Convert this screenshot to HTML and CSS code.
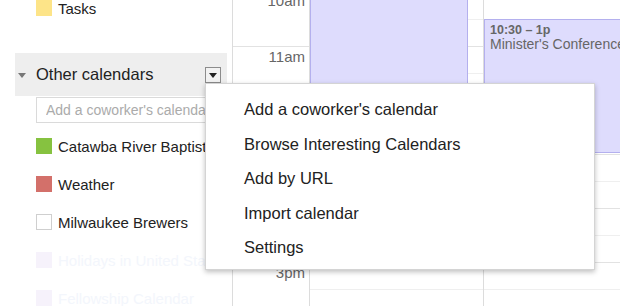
FILE: index.html
```html
<!DOCTYPE html>
<html lang="en">

<head>
    <meta charset="UTF-8">
    <title>Calendar</title>
    <link rel="stylesheet" href="styles.css">
</head>

<body>

    <div class="app">
        <aside class="sidebar">
            <div class="cal-item">
                <span class="swatch yellow"></span>
                <span class="cal-name">Tasks</span>
            </div>

            <div class="section-head">
                <span class="caret"></span>
                <span class="section-title">Other calendars</span>
                <span class="menu-btn"><span class="menu-btn-arrow"></span></span>
            </div>
            <input class="add-input" type="text" placeholder="Add a coworker's calendar">

            <div class="cal-list">
                <div class="cal-item">
                    <span class="swatch green"></span>
                    <span class="cal-name">Catawba River Baptist Association</span>
                </div>
                <div class="cal-item">
                    <span class="swatch red"></span>
                    <span class="cal-name">Weather</span>
                </div>
                <div class="cal-item">
                    <span class="swatch empty"></span>
                    <span class="cal-name">Milwaukee Brewers</span>
                </div>
                <!-- faded rows at the bottom of the shot -->
                <div class="cal-item faded">
                    <span class="swatch pale"></span>
                    <span class="cal-name">Holidays in United States</span>
                </div>
                <div class="cal-item faded">
                    <span class="swatch pale"></span>
                    <span class="cal-name">Fellowship Calendar</span>
                </div>
            </div>
        </aside>

        <main class="week">
            <div class="times">
                <div class="hour">10am</div>
                <div class="hour">11am</div>
                <div class="hour">12pm</div>
                <div class="hour">1pm</div>
                <div class="hour">2pm</div>
                <div class="hour">3pm</div>
            </div>
            <div class="day">
                <div class="event event-long"></div>
            </div>
            <div class="day">
                <div class="event event-conf">
                    <div class="event-time">10:30 – 1p</div>
                    <div class="event-title">Minister's Conference</div>
                </div>
            </div>
        </main>

        <ul class="menu">
            <li>Add a coworker's calendar</li>
            <li>Browse Interesting Calendars</li>
            <li>Add by URL</li>
            <li>Import calendar</li>
            <li>Settings</li>
        </ul>
    </div>

</body>

</html>
```

FILE: styles.css
```css
body {
    margin: 0;
    font-family: "Liberation Sans", Arial, sans-serif;
    background-color: #fff;
    color: #222;
}

.app {
    position: relative;
    display: flex;
    width: 620px;
    height: 306px;
    overflow: hidden;
}

/* left column */
.sidebar {
    width: 232px;
    flex-shrink: 0;
    border-right: 1px solid #dcdcdc;
}

.cal-item {
    display: flex;
    align-items: center;
    gap: 6px;
    height: 16px;
    padding-left: 36px;
    font-size: 15px;
    white-space: nowrap;
}

.swatch {
    width: 16px;
    height: 16px;
    flex-shrink: 0;
    box-sizing: border-box;
}

.yellow { background-color: #fde488; }
.green { background-color: #86c240; }
.red { background-color: #d3706a; }
.empty { border: 1px solid #cfcfcf; background-color: #fff; }
.pale { background-color: #f6f2fb; }

.section-head {
    display: flex;
    align-items: center;
    height: 43px;
    margin: 37px 5px 0 15px;
    background-color: #eeeeee;
}

.caret {
    margin: 2px 10px 0 3px;
    border-left: 4px solid transparent;
    border-right: 4px solid transparent;
    border-top: 5px solid #777;
}

.section-title {
    font-size: 16.5px;
    flex: 1;
}

.menu-btn {
    display: flex;
    align-items: center;
    justify-content: center;
    width: 14px;
    height: 14px;
    margin: 1px 6px 0 0;
    border: 1px solid #8c8c8c;
    background-color: #f2f2f2;
}

.menu-btn-arrow {
    border-left: 4px solid transparent;
    border-right: 4px solid transparent;
    border-top: 5px solid #222;
}

.add-input {
    display: block;
    box-sizing: border-box;
    width: 191px;
    height: 26px;
    margin: 1px 0 0 36px;
    padding: 0 9px;
    border: 1px solid #dadada;
    font-family: inherit;
    font-size: 14px;
}

.add-input::placeholder {
    color: #ababab;
}

.cal-list {
    display: flex;
    flex-direction: column;
    gap: 22px;
    margin-top: 15px;
}

.faded .cal-name {
    color: #f3f6fc;
}

/* time grid */
.week {
    flex: 1;
    display: flex;
    background-image: repeating-linear-gradient(to bottom,
            transparent 0 26px, #efefef 26px 27px,
            transparent 27px 53px, #e2e2e2 53px 54px);
    background-position: 0 -7px;
}

.times {
    width: 76px;
    flex-shrink: 0;
    margin-top: -8px;
    border-right: 1px solid #dcdcdc;
    background-image: repeating-linear-gradient(to bottom,
            transparent 0 53px, #e2e2e2 53px 54px);
    background-color: #fff;
    background-position: 0 1px;
}

.hour {
    height: 54px;
    box-sizing: border-box;
    padding: 2px 4px 0 0;
    text-align: right;
    font-size: 15px;
    line-height: 17px;
    color: #666;
}

.hour:first-child {
    padding-top: 0;
}

.day {
    position: relative;
    width: 173px;
    flex-shrink: 0;
    border-right: 1px solid #dcdcdc;
}

.event {
    position: absolute;
    left: 0;
    box-sizing: border-box;
    background-color: #dedcfd;
    border: 1px solid #b4b0ee;
    color: #666;
    overflow: hidden;
    white-space: nowrap;
}

.event-long {
    top: -10px;
    width: 158px;
    height: 230px;
}

.event-conf {
    top: 19px;
    width: 200px;
    height: 134px;
    padding: 4px 0 0 5px;
}

.event-time {
    font-size: 12.5px;
    font-weight: bold;
    line-height: 13px;
}

.event-title {
    font-size: 14px;
    line-height: 15px;
}

/* dropdown */
.menu {
    position: absolute;
    left: 205px;
    top: 83px;
    width: 390px;
    height: 187px;
    box-sizing: border-box;
    margin: 0;
    padding: 8px 0 0;
    list-style: none;
    background-color: #fff;
    border: 1px solid #d4d4d4;
    box-shadow: 0 2px 5px rgba(0, 0, 0, 0.25);
}

.menu li {
    height: 34.5px;
    line-height: 34.5px;
    padding-left: 38px;
    font-size: 16.5px;
    color: #222;
}
```
